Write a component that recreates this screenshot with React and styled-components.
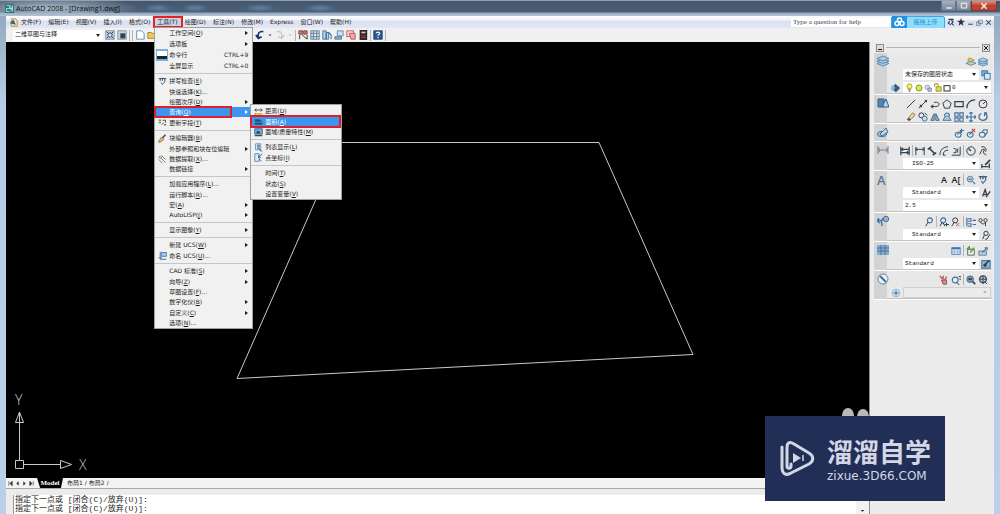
import styled, { createGlobalStyle } from "styled-components";

const GlobalStyle = createGlobalStyle`
	* {
		box-sizing: border-box;
	}

	body {
		margin: 0;
		font-family: "DejaVu Sans", "Noto Sans CJK SC", sans-serif;
		font-size: 6px;
		line-height: 10px;
		color: #1c1c1c;
	}

	button,
	input,
	select {
		font: inherit;
		color: inherit;
		margin: 0;
		padding: 0;
		border: 0;
		border-radius: 0;
		background: none;
		outline: none;
	}
`;

const ink = { fill: "none", stroke: "#33424f", strokeWidth: 1.2 };
const blue = { fill: "none", stroke: "#3f6f9f", strokeWidth: 1.3 };
const gold = { fill: "none", stroke: "#b98d2c", strokeWidth: 1.5 };

/* every glyph is drawn on a 12 x 12 grid */
const glyphs = {
	gear: (
		<>
			<rect x="1" y="1" width="10" height="10" fill="#d4dde6" stroke="#6f8190" />
			<circle cx="6" cy="6" r="2.6" {...blue} />
			<path d="M2 2l2 2M10 2L8 4M2 10l2-2M10 10L8 8" {...ink} />
		</>
	),
	workspace: (
		<>
			<rect x="1" y="1" width="10" height="10" fill="#c8d2db" stroke="#7c8b98" />
			<rect x="4" y="4" width="6" height="6" fill="#29435c" />
		</>
	),
	page: <path d="M2 1h6l3 3v7H2z" fill="#fff" stroke="#4b86bd" />,
	folder: <path d="M1 3h4l1 1h5v6H1z" fill="#f2c75c" stroke="#9b7a2a" />,
	save: <path d="M1 1h10v10H1zM3 1v4h6V1" fill="#6f97c4" stroke="#2e4d73" />,
	undo: <path d="M10 2C5 1 3 4 4 9M1 6l3 4 4-2" fill="none" stroke="#14346e" strokeWidth="2" />,
	redo: <path d="M2 2c5-1 7 2 6 7M11 6l-3 4-4-2" fill="none" stroke="#c2c7cc" strokeWidth="1.6" />,
	caret: <path d="M3 5h6l-3 3z" fill="#222" />,
	caretGray: <path d="M3 5h6l-3 3z" fill="#b5b5b5" />,
	props: (
		<>
			<path d="M1 1h5v4H1zM7 1h4v4H7z" fill="#cf7b6b" stroke="#7a3a33" />
			<path d="M2 6v5M5 6l6 5M11 6v5" {...ink} />
		</>
	),
	design: (
		<>
			<rect x="1" y="1" width="10" height="10" fill="#dbe6ef" stroke="#55748f" />
			<path d="M4 1v10M8 1v10M1 4h10M1 8h10" stroke="#55748f" />
		</>
	),
	palette: (
		<>
			<path d="M1 1h4v10H1zM5 3h3v8H5z" fill="#b4d3ee" stroke="#336699" />
			<path d="M8 3l3 3v5" {...blue} />
		</>
	),
	sheet: (
		<>
			<path d="M4 1h7v6H4z" fill="#cfe0ef" stroke="#5784ab" />
			<path d="M1 8h8v3H1z" fill="#8eb3d2" stroke="#4b7092" />
		</>
	),
	markup: (
		<>
			<rect x="1" y="1" width="8" height="7" fill="#fbdada" stroke="#c84a4a" />
			<path d="M4 4h7v7H6z" fill="#f1aaaa" stroke="#b04b54" />
		</>
	),
	calc: (
		<>
			<rect x="2" y="0" width="9" height="12" fill="#34262a" />
			<path d="M4 3h5" stroke="#cfc4b4" strokeWidth="2" />
			<path d="M4 7h5M4 9h5" stroke="#a24a44" />
		</>
	),
	help: (
		<>
			<rect x="1" y="1" width="10" height="10" fill="#2a5a96" stroke="#18365d" />
			<path d="M4 4c0-2 4-2 4 0s-2 1-2 3M6 8v2" fill="none" stroke="#fff" strokeWidth="1.3" />
		</>
	),
	prompt: (
		<>
			<rect x="0" y="0" width="12" height="12" fill="#78afdf" />
			<rect x="1" y="2" width="10" height="8" fill="#fff" />
			<path d="M1 7h10v3H1z" fill="#1e2427" />
		</>
	),
	spell: (
		<>
			<path d="M1 2h10M3 2v3M6 1v4M9 2v3" stroke="#3f617d" strokeWidth="1.6" />
			<path d="M4 7l2 3 4-5" {...blue} />
		</>
	),
	field: (
		<>
			<path d="M1 3h3M1 6h3M8 9h3" stroke="#4b9b55" strokeWidth="2" />
			<path d="M6 3h4v3M5 9L8 6" {...ink} />
		</>
	),
	brush: (
		<>
			<path d="M10 1L5 6" {...ink} strokeWidth="2" />
			<path d="M5 4l3 3-5 4H1V9z" fill="#e6bd6b" stroke="#87672e" />
		</>
	),
	extract: (
		<>
			<path d="M2 2l8 8M5 1l5 5M1 6l5 5" stroke="#6b7884" strokeWidth="1.2" />
			<circle cx="3" cy="3" r="1.6" fill="#e9ded5" stroke="#85746b" />
		</>
	),
	ucs: (
		<>
			<path d="M3 1v10h8M1 9h4" {...blue} />
			<rect x="5" y="2" width="6" height="5" fill="#a8cbea" stroke="#2f6ba4" />
		</>
	),
	distance: (
		<>
			<path d="M1 4h10M3 2L1 4l2 2M9 2l2 2-2 2" {...ink} />
			<path d="M0 8h12v3H0z" fill="#ecd06c" />
			<path d="M2 8v2M5 8v2M8 8v2" stroke="#8a7429" />
		</>
	),
	area: (
		<>
			<path d="M1 3h7l3 4H1z" fill="#31566f" />
			<path d="M1 9h10" stroke="#26455b" strokeWidth="2" />
		</>
	),
	mass: (
		<>
			<rect x="1" y="1" width="10" height="7" fill="#6fa7d4" stroke="#2b5d8e" />
			<path d="M3 7c1-4 4-4 5 0" fill="#1d3e60" />
			<path d="M1 10h10" stroke="#314d63" strokeWidth="2" />
		</>
	),
	list: (
		<>
			<path d="M2 1h7v8H2z" fill="#dceaf6" stroke="#4b86bd" />
			<path d="M4 3h4M4 5h4M4 7h4" {...blue} />
			<path d="M7 9l4 2" {...ink} />
		</>
	),
	point: (
		<>
			<path d="M1 1h6v10H1z" fill="#dceaf6" stroke="#3d78af" />
			<path d="M11 1L6 6M6 3v3h3M7 8l3 3" {...blue} />
		</>
	),
	layers: (
		<g fill="#a9c9e2" stroke="#4c7ca2" strokeWidth=".8">
			<path d="M6 6l6 2.5L6 11 0 8.500z" />
			<path d="M6 3.500l6 2.500-6 2.500L0 6z" />
			<path d="M6 1l6 2.500L6 6 0 3.500z" />
		</g>
	),
	layerGold: (
		<>
			<path d="M6 5l6 2.500L6 10 0 7.500z" fill="#b9cede" stroke="#587f9c" />
			<path d="M4 1l6 3-4 2-4-2z" fill="#e9c75e" stroke="#a5832b" />
		</>
	),
	layerCopy: (
		<>
			<rect x="1" y="1" width="7" height="6" fill="#7eb2dd" stroke="#2b679c" />
			<rect x="4" y="4" width="7" height="7" fill="#d7e8f5" stroke="#2b679c" />
		</>
	),
	layerIso: (
		<>
			<path d="M5 1l6 5-5 5-5-4z" fill="#2f5b87" />
			<path d="M1 2l4 3-2 5-3-2z" fill="#8bb4d9" />
		</>
	),
	bulb: (
		<>
			<circle cx="6" cy="4.500" r="3.400" fill="#f9ee5e" stroke="#98902f" />
			<path d="M4.500 9h3M5 11h2" {...ink} />
		</>
	),
	sun: <circle cx="6" cy="6" r="4.500" fill="#dced3a" stroke="#879526" strokeWidth="1.500" />,
	snow: (
		<>
			<circle cx="5" cy="5" r="3.500" fill="#d4d9ea" stroke="#8089aa" />
			<path d="M6 6h5v5H6z" fill="#bbc3dd" stroke="#68739c" />
		</>
	),
	lock: (
		<>
			<path d="M2 5V3c0-3 5-3 5 0v1" {...gold} />
			<path d="M4 5h7v6H4z" fill="#d8e23e" stroke="#7e8427" />
		</>
	),
	swatch: <rect x="1.500" y="2.500" width="9" height="8" fill="#fff" stroke="#333" strokeWidth="1.500" />,
	draw: (
		<>
			<path d="M1 2h6v8H1z" fill="#5486b4" stroke="#315e88" />
			<path d="M6 8l3-6 3 8H6z" fill="#b9d2e8" stroke="#315e88" />
		</>
	),
	line: <path d="M1 11L11 1" {...ink} />,
	xline: (
		<>
			<path d="M1 11L11 1" {...ink} />
			<path d="M3 7v2h2M8 2h2v2" {...ink} strokeWidth="1.600" />
		</>
	),
	polyline: <path d="M1 9h6c5 0 5-5 1-5H5M4 7L1 9l3 2" {...ink} />,
	polygon: <path d="M6 1l5 4-2 6H3L1 5z" {...ink} />,
	rect: <path d="M1 3h10v6H1z" {...ink} strokeWidth="1.500" />,
	arc: <path d="M1 11C1 5 5 1 11 1" {...ink} strokeWidth="1.500" />,
	circle: (
		<>
			<circle cx="6" cy="6" r="4.800" {...ink} />
			<path d="M6 6l3-3" {...ink} />
		</>
	),
	eraser: (
		<>
			<path d="M3 7l5-6 3 2-5 6z" fill="#efd59a" stroke="#8d743d" />
			<path d="M1 9l2-2 3 2-2 2z" fill="#555" />
		</>
	),
	copy: (
		<>
			<circle cx="4" cy="4" r="3" {...ink} />
			<circle cx="8" cy="8" r="3" fill="#cadced" stroke="#33628c" />
			<path d="M8 1l3 3" {...ink} />
		</>
	),
	mirror: (
		<>
			<path d="M5 2v8H1zM7 2v8h4z" fill="#9fc0dd" stroke="#33526d" />
		</>
	),
	offset: (
		<>
			<path d="M1 10h10L8 5H4z" fill="#a9c8e4" stroke="#41698c" />
			<path d="M3 5c0-5 6-5 6 0" {...blue} />
		</>
	),
	array: <path d="M1 1h4v4H1zM7 1h4v4H7zM1 7h4v4H1zM7 7h4v4H7z" {...blue} />,
	move: <path d="M6 0v12M0 6h12M4 2l2-2 2 2M4 10l2 2 2-2M2 4L0 6l2 2M10 4l2 2-2 2" {...blue} />,
	rotate: <path d="M8 1c5 3 3 9-2 9S-1 4 4 2M8 5V1h3" {...blue} strokeWidth="1.500" />,
	orbit: (
		<>
			<ellipse cx="5" cy="8" rx="4.500" ry="2.500" fill="#9dc1df" stroke="#3d6d96" />
			<path d="M3 8l6-6 2 4-6 4z" fill="#bed5e8" stroke="#3d6d96" />
		</>
	),
	orbitAdd: (
		<>
			<ellipse cx="5" cy="8" rx="3.500" ry="3" {...blue} />
			<path d="M4 8l5-5M9 1v5M7 3h5" {...blue} />
		</>
	),
	orbitCut: (
		<>
			<ellipse cx="5" cy="8" rx="3.500" ry="3" {...blue} />
			<path d="M4 8l4-4" {...blue} />
			<path d="M7 1l4 4M11 1L7 5" stroke="#c94444" strokeWidth="1.400" />
		</>
	),
	orbitPair: (
		<>
			<ellipse cx="5" cy="8" rx="3.500" ry="3" {...blue} />
			<path d="M5 5l2-3h4v4L8 9" {...blue} />
		</>
	),
	dimension: <path d="M1 2v8M11 2v8M1 6h10M3 4L1 6l2 2M9 4l2 2-2 2" fill="none" stroke="#6c8193" />,
	dimFast: <path d="M1 1v10M11 1v10M1 4h10M1 8h10M3 2v4M9 6v4" {...ink} strokeWidth="1.500" />,
	dimLinear: <path d="M1 1v10M11 1v10M1 4h10M3 2L1 4l2 2M9 2l2 2-2 2" {...ink} />,
	dimAligned: <path d="M1 4l4-3M7 11l4-3M3 3l6 6" {...ink} strokeWidth="2" />,
	dimArc: <path d="M1 11C1 5 5 1 11 1M5 11c0-4 2-6 6-6M5 11h3" {...ink} />,
	dimOrdinate: <path d="M1 11h10V1M3 8h3V3M8 3v5M3 3h2" {...ink} />,
	dimRadius: (
		<>
			<circle cx="6" cy="6" r="5" {...ink} />
			<path d="M6 6L3 3" {...ink} strokeWidth="1.600" />
		</>
	),
	dimJog: <path d="M2 10L5 4h3L6 8l4 3M4 1c5-1 7 3 5 6" {...ink} />,
	dimStyle: (
		<>
			<path d="M1 6v5M1 9h8M10 5v6" {...ink} strokeWidth="1.500" />
			<path d="M5 7l6-6" {...ink} strokeWidth="2" />
		</>
	),
	find: (
		<>
			<circle cx="5" cy="5" r="3.500" fill="#b8cfe0" stroke="#55758e" />
			<path d="M8 8l3 3M3 5h4" {...blue} />
		</>
	),
	pen: <path d="M2 10L5 2l2 6M3 8h4M6 11l5-7" {...ink} strokeWidth="1.600" />,
	leaderPen: (
		<>
			<circle cx="6" cy="4" r="2.600" {...ink} />
			<path d="M4 6l-2 5M5 11h2l4-6" {...ink} />
		</>
	),
	leader: (
		<>
			<path d="M5 11C5 6 4 4 1 6M2 3L0 6l3 2" {...blue} />
			<path d="M5 6c0-2 1-3 3-3" {...blue} />
			<circle cx="9" cy="4" r="2.700" fill="#92b6d3" stroke="#4d7696" />
		</>
	),
	leaderOne: (
		<>
			<circle cx="7" cy="4" r="3" {...blue} />
			<path d="M5 6l-3 5" {...ink} />
		</>
	),
	leaderAdd: (
		<>
			<circle cx="5" cy="4" r="3" {...blue} />
			<path d="M4 6l-3 5M5 7l2 4M7 9h5M9 7v4" {...ink} />
		</>
	),
	leaderCut: (
		<>
			<circle cx="5" cy="4" r="3" {...ink} />
			<path d="M4 6l-3 5" {...ink} />
			<path d="M6 7l4 4M10 7l-4 4" stroke="#bd6969" strokeWidth="1.200" />
		</>
	),
	leaderAlign: <path d="M1 1v10M2 2h4v3H2M2 8h4v3H2M8 4h4M8 9h4" {...blue} />,
	leaderGroup: (
		<>
			<circle cx="3" cy="4" r="2" {...ink} />
			<circle cx="9" cy="4" r="2" {...ink} />
			<path d="M3 6c1 3 5 3 6 0v5" {...ink} />
		</>
	),
	tableBig: (
		<>
			<rect x="0" y="1" width="12" height="10" fill="#86acd0" />
			<path d="M0 4h12M0 7h12M4 1v10M8 1v10" stroke="#4a7398" />
		</>
	),
	table: (
		<>
			<rect x="1" y="2" width="10" height="8" fill="#e0ecf7" stroke="#3d78af" />
			<path d="M1 3h10" stroke="#3d78af" strokeWidth="2" />
			<path d="M4 4v6M8 4v6M1 7h10" stroke="#8cb1d2" />
		</>
	),
	tableLink: (
		<>
			<path d="M2 4h8v7H2z" fill="#e6efe0" stroke="#555" />
			<path d="M1 4l3-3v3h4M5 8l5-6" stroke="#57953e" strokeWidth="1.600" fill="none" />
		</>
	),
	tableOut: (
		<>
			<path d="M1 6h9v5H1z" fill="#b5d0e6" stroke="#55758e" />
			<path d="M5 8l6-6M8 2h3v3" {...blue} />
		</>
	),
	tableStyle: (
		<>
			<rect x="1" y="2" width="10" height="9" fill="#8eb8df" stroke="#27527c" />
			<path d="M3 8l7-6M4 9l3-2" {...ink} strokeWidth="2" />
		</>
	),
	compass: (
		<>
			<circle cx="6" cy="6" r="5" fill="#e8f0f7" stroke="#6d8ca6" />
			<path d="M3 3l6 6" {...blue} strokeWidth="2" />
		</>
	),
	pan: (
		<>
			<path d="M1 1l3 4M5 1v4M9 2L7 6" stroke="#c65a63" strokeWidth="1.800" />
			<path d="M3 6h6v5H5z" fill="#d98d90" stroke="#87454b" />
		</>
	),
	zoomLive: (
		<>
			<circle cx="5" cy="6" r="3.500" {...blue} />
			<path d="M7 9l3 3M9 2h3M10 5h2" {...ink} />
		</>
	),
	zoomArea: (
		<>
			<circle cx="5" cy="5" r="4" fill="#7895ad" stroke="#4e687d" />
			<path d="M8 8l3 3M3 5h4" {...ink} strokeWidth="2" />
		</>
	),
	zoomAll: (
		<>
			<circle cx="6" cy="5" r="4" fill="#c4ced7" stroke="#3e5060" strokeWidth="1.500" />
			<path d="M6 1v10M1 5h10M8 8l3 3" {...ink} />
		</>
	),
	camera: (
		<>
			<circle cx="6" cy="6" r="4.500" fill="#dbe6ef" stroke="#8ba6bd" />
			<path d="M6 3v6M3 6h6" {...blue} />
		</>
	),
	dwg: (
		<>
			<path d="M3 1h6l2 3v7H3z" fill="#f5e3a0" stroke="#a5832b" />
			<path d="M1 7l5-5 3 7z" fill="#2c62a5" />
		</>
	),
	star: <path d="M6 0l1.500 4.300H12L8.400 7l1.300 4.500L6 9l-3.700 2.500L3.600 7 0 4.300h4.500z" fill="#333" />,
	satellite: <path d="M2 2h4l3 4-2 2 3 3M4 4l-2 4 4 2M7 1l3 2" {...ink} strokeWidth="1.700" />,
	minimize: <path d="M2 9h8" stroke="currentColor" strokeWidth="2" />,
	maximize: <path d="M2 2h8v7H2z" fill="none" stroke="currentColor" strokeWidth="1.500" />,
	restore: <path d="M4 2h7v6H4zM1 5h6v6H1z" fill="none" stroke="currentColor" />,
	close: <path d="M2 2l8 8M10 2l-8 8" stroke="currentColor" strokeWidth="2" />,
	first: <path d="M3 2v8M9 2L5 6l4 4z" fill="#333" stroke="#333" />,
	prev: <path d="M8 2L4 6l4 4z" fill="#333" />,
	next: <path d="M4 2l4 4-4 4z" fill="#333" />,
	last: <path d="M9 2v8M3 2l4 4-4 4z" fill="#333" stroke="#333" />,
};

const Icon = ({ name, size = 10 }) => (
	<svg width={size} height={size} viewBox="0 0 12 12" aria-hidden="true">
		{glyphs[name]}
	</svg>
);

/* "(O)" style accelerator, underlined in drop-down menus */
const Label = ({ text, hotkey, after = "" }) => (
	<span>
		{text}(<u>{hotkey}</u>){after}
	</span>
);

const toolsMenu = [
	[
		{ text: "工作空间", hotkey: "O", sub: true },
		{ text: "选项板", sub: true },
		{ text: "命令行", icon: "prompt", keys: "CTRL+9" },
		{ text: "全屏显示", keys: "CTRL+0" },
	],
	[
		{ text: "拼写检查", hotkey: "E", icon: "spell" },
		{ text: "快速选择", hotkey: "K", after: "..." },
		{ text: "绘图次序", hotkey: "D", sub: true },
		{ text: "查询", hotkey: "Q", sub: true, active: true },
		{ text: "更新字段", hotkey: "T", icon: "field" },
	],
	[
		{ text: "块编辑器", hotkey: "B", icon: "brush" },
		{ text: "外部参照和块在位编辑", sub: true },
		{ text: "数据提取", hotkey: "X", after: "...", icon: "extract" },
		{ text: "数据链接", sub: true },
	],
	[
		{ text: "加载应用程序", hotkey: "L", after: "..." },
		{ text: "运行脚本", hotkey: "R", after: "..." },
		{ text: "宏", hotkey: "A", sub: true },
		{ text: "AutoLISP", hotkey: "J", sub: true },
	],
	[{ text: "显示图像", hotkey: "Y", sub: true }],
	[
		{ text: "新建 UCS", hotkey: "W", sub: true },
		{ text: "命名 UCS", hotkey: "U", after: "...", icon: "ucs" },
	],
	[
		{ text: "CAD 标准", hotkey: "S", sub: true },
		{ text: "向导", hotkey: "Z", sub: true },
		{ text: "草图设置", hotkey: "F", after: "..." },
		{ text: "数字化仪", hotkey: "B", sub: true },
		{ text: "自定义", hotkey: "C", sub: true },
		{ text: "选项", hotkey: "N", after: "..." },
	],
];

const inquiryMenu = [
	[
		{ text: "距离", hotkey: "D", icon: "distance" },
		{ text: "面积", hotkey: "A", icon: "area", active: true },
		{ text: "面域/质量特性", hotkey: "M", icon: "mass" },
	],
	[
		{ text: "列表显示", hotkey: "L", icon: "list" },
		{ text: "点坐标", hotkey: "I", icon: "point" },
	],
	[
		{ text: "时间", hotkey: "T" },
		{ text: "状态", hotkey: "S" },
		{ text: "设置变量", hotkey: "V" },
	],
];

const Menu = ({ groups, submenu }) => (
	<MenuBox $submenu={submenu}>
		{groups.map((group, i) => (
			<MenuGroup key={i}>
				{group.map((item) => (
					<MenuItem key={item.text} $active={item.active} $short={item.sub}>
						<button>
							<i>{item.icon && <Icon name={item.icon} size={item.keys ? 12 : 9} />}</i>
							{item.hotkey ? <Label {...item} /> : <span>{item.text}</span>}
							{item.keys && <kbd>{item.keys}</kbd>}
							{item.sub && <Arrow />}
						</button>
						{item.active && !submenu && <Menu groups={inquiryMenu} submenu />}
					</MenuItem>
				))}
			</MenuGroup>
		))}
	</MenuBox>
);

const Select = ({ label, value, indent, disabled, children }) => (
	<SelectBox $indent={indent} $disabled={disabled}>
		{children}
		<select aria-label={label} disabled={disabled}>
			<option>{value}</option>
		</select>
	</SelectBox>
);

const Tools = ({ names }) => (
	<ToolRow>
		{names.map((name, i) =>
			name === "|" ? (
				<Divider key={i} />
			) : (
				<IconButton key={i} aria-label={name}>
					{name === "A" || name === "A[" ? <b>{name}</b> : <Icon name={name} />}
				</IconButton>
			)
		)}
	</ToolRow>
);

const Section = ({ icon, children }) => (
	<SectionBox>
		<div className="mark">{icon === "A" ? <b>A</b> : <Icon name={icon} size={12} />}</div>
		<div className="body">{children}</div>
	</SectionBox>
);

const menusBefore = ["文件(F)", "编辑(E)", "视图(V)", "插入(I)", "格式(O)"];
const menusAfter = ["绘图(D)", "标注(N)", "修改(M)", "Express", "窗口(W)", "帮助(H)"];

const App = () => (
	<Window>
		<GlobalStyle />
		<TitleBar>
			<AppIcon>
				<svg width="9" height="9" viewBox="0 0 12 12" aria-hidden="true">
					<rect width="12" height="12" fill="#247b78" />
					<path d="M2 2h4v4H2v4h4M8 2v8M10 2v8M6 6h4" fill="none" stroke="#d5eeee" />
				</svg>
			</AppIcon>
			<h1>AutoCAD 2008 - [Drawing1.dwg]</h1>
			<WindowButtons>
				<button aria-label="最小化">
					<Icon name="minimize" size={8} />
				</button>
				<button aria-label="最大化">
					<Icon name="maximize" size={8} />
				</button>
				<button aria-label="关闭" className="close">
					<Icon name="close" size={8} />
				</button>
			</WindowButtons>
		</TitleBar>

		<MenuBar>
			<Icon name="dwg" size={9} />
			<nav>
				{menusBefore.map((name) => (
					<MenuButton key={name}>{name}</MenuButton>
				))}
				<MenuAnchor>
					<MenuButton $open>工具(T)</MenuButton>
					<Menu groups={toolsMenu} />
				</MenuAnchor>
				{menusAfter.map((name) => (
					<MenuButton key={name}>{name}</MenuButton>
				))}
			</nav>
			<HelpInput aria-label="help" placeholder="Type a question for help" />
			<Upload>
				<svg width="15" height="12" viewBox="0 0 15 12" aria-hidden="true">
					<g fill="none" stroke="#fff" strokeWidth="1.500">
						<circle cx="7.500" cy="4" r="2" />
						<circle cx="5" cy="7.500" r="2" />
						<circle cx="10" cy="7.500" r="2" />
					</g>
				</svg>
				<span>拖拽上传</span>
			</Upload>
			<ChildButtons>
				<IconButton aria-label="通讯中心">
					<Icon name="satellite" size={8} />
				</IconButton>
				<IconButton aria-label="收藏夹">
					<Icon name="star" size={8} />
				</IconButton>
				<IconButton aria-label="最小化图形">
					<Icon name="minimize" size={7} />
				</IconButton>
				<IconButton aria-label="还原图形">
					<Icon name="restore" size={7} />
				</IconButton>
				<IconButton aria-label="关闭图形">
					<Icon name="close" size={7} />
				</IconButton>
			</ChildButtons>
		</MenuBar>

		<Toolbar>
			<div className="workspace">
				<Select label="工作空间" value="二维草图与注释" />
			</div>
			<Tools names={["gear", "workspace"]} />
			<Divider />
			<Divider />
			<Tools
				names={["page", "folder", "save", "page", "page", "copy", "copy", "page", "brush", "save"]}
			/>
			<Tools names={["undo"]} />
			<Icon name="caret" size={6} />
			<Tools names={["redo"]} />
			<Icon name="caretGray" size={6} />
			<Divider />
			<Tools names={["props", "design", "palette", "sheet", "markup", "calc"]} />
			<Divider />
			<Tools names={["help"]} />
			<Divider />
		</Toolbar>

		<Workspace>
			<Main>
				<Canvas>
					<svg viewBox="0 0 863 436" preserveAspectRatio="xMinYMin meet">
						<g fill="none" stroke="#c9c9c9">
							<path d="M335 100.500H593L687 312.500 231 336.500z" />
							<path d="M13.500 380V370M9.500 418.500h8v8h-8zM13.500 418V381M9.500 380.500h8L13.500 370zM18 422.500H55M54.500 418.500v8l11-4z" />
						</g>
						<text x="9" y="363">
							Y
						</text>
						<text x="73" y="428">
							X
						</text>
						<ellipse cx="842" cy="374" rx="6" ry="8" fill="#b9b9b9" />
						<ellipse cx="857" cy="375" rx="6" ry="8" fill="#b9b9b9" />
					</svg>
				</Canvas>
				<LayoutTabs>
					<Icon name="first" size={7} />
					<Icon name="prev" size={7} />
					<Icon name="next" size={7} />
					<Icon name="last" size={7} />
					<button className="model">Model</button>
					<button>布局1</button>
					<span>/</span>
					<button>布局2</button>
					<span>/</span>
				</LayoutTabs>
				<Command>
					<output>
						指定下一点或 [闭合(C)/放弃(U)]:
						<br />
						指定下一点或 [闭合(C)/放弃(U)]:
					</output>
					<div className="scroll">
						<Icon name="caret" size={7} />
					</div>
				</Command>
			</Main>

			<Dashboard>
				<header>
					<IconButton aria-label="收起面板">
						<Icon name="minimize" size={6} />
					</IconButton>
					<hr />
					<IconButton aria-label="关闭面板">
						<Icon name="close" size={6} />
					</IconButton>
				</header>
				<Section icon="layers">
					<Tools names={["layerGold", "layers"]} />
					<Row>
						<Select label="图层状态" value="未保存的图层状态" />
						<Icon name="layerCopy" />
					</Row>
					<Row $wide>
						<Icon name="layerIso" />
						<Select label="图层" value="0">
							<Icon name="bulb" size={9} />
							<Icon name="sun" size={8} />
							<Icon name="snow" size={8} />
							<Icon name="lock" size={9} />
							<Icon name="swatch" size={8} />
						</Select>
					</Row>
				</Section>
				<Section icon="draw">
					<Tools names={["line", "xline", "polyline", "polygon", "rect", "arc", "circle"]} />
					<Tools names={["eraser", "copy", "mirror", "offset", "array", "move", "rotate"]} />
				</Section>
				<Section icon="orbit">
					<Tools names={["orbitAdd", "orbitCut", "orbitPair"]} />
				</Section>
				<Section icon="dimension">
					<Tools
						names={["dimFast", "|", "dimLinear", "dimAligned", "dimArc", "dimOrdinate", "|", "dimRadius", "dimJog"]}
					/>
					<Row>
						<Select label="标注样式" value="ISO-25" indent />
						<Icon name="dimStyle" />
					</Row>
				</Section>
				<Section icon="A">
					<Tools names={["A", "A[", "|", "find", "spell"]} />
					<Row>
						<Select label="文字样式" value="Standard" indent />
						<Icon name="pen" />
					</Row>
					<Row>
						<Select label="文字高度" value="2.5" />
					</Row>
				</Section>
				<Section icon="leader">
					<Tools names={["leaderOne", "|", "leaderAdd", "leaderCut", "|", "leaderAlign", "leaderGroup"]} />
					<Row>
						<Select label="引线样式" value="Standard" indent />
						<Icon name="leaderPen" />
					</Row>
				</Section>
				<Section icon="tableBig">
					<Tools names={["table", "|", "tableLink", "tableOut"]} />
					<Row>
						<Select label="表格样式" value="Standard" />
						<Icon name="tableStyle" />
					</Row>
				</Section>
				<Section icon="compass">
					<Tools names={["pan", "zoomLive", "|", "zoomArea", "zoomAll"]} />
					<Row $wide>
						<Icon name="camera" />
						<Select label="视图" value="" disabled />
					</Row>
				</Section>
			</Dashboard>
		</Workspace>

		<Watermark>
			<svg width="36" height="38" viewBox="0 0 36 38" aria-hidden="true">
				<g fill="none" stroke="#d3d7e4" strokeWidth="3" strokeLinecap="round" strokeLinejoin="round">
					<path d="M3 7v20c0 7 4 9 9 6l18-9c5-3 5-8 0-11L15 4C10 1 8 3 8 8v18c0 3 4 3 4 0v-2" />
				</g>
				<path d="M14 13l8 5-8 5z" fill="#d3d7e4" />
				<path d="M24 15v6" stroke="#d3d7e4" strokeWidth="1.500" />
			</svg>
			<div>
				<strong>溜溜自学</strong>
				<span>zixue.3D66.COM</span>
			</div>
		</Watermark>
	</Window>
);

const Window = styled.div`
	position: relative;
	display: flex;
	flex-direction: column;
	height: 100vh;
	padding: 0 6px;
	overflow: hidden;
	background: linear-gradient(#8fa3b8, #b4cce5 100px, #b9d0e8);
	border-top: 1px solid #93a0ae;
`;

const TitleBar = styled.header`
	display: flex;
	align-items: center;
	gap: 2px;
	height: 15px;
	margin: 0 -6px;
	padding-left: 5px;
	background:
		radial-gradient(ellipse 90px 14px at 50px 8px, #aebccb, transparent),
		radial-gradient(ellipse 14px 4px at 158px 7px, #5f83a5, transparent),
		radial-gradient(ellipse 14px 4px at 195px 7px, #5f83a5, transparent),
		radial-gradient(ellipse 16px 4px at 260px 7px, #5f83a5, transparent),
		radial-gradient(ellipse 16px 4px at 320px 7px, #5f83a5, transparent),
		linear-gradient(#43566d, #4b6077 11px, #92a7bd 12px, #b7c6d8);

	h1 {
		flex: 1;
		margin: 0;
		font-family: "Open Sans", sans-serif;
		font-size: 7px;
		font-weight: 400;
		color: #111;
	}
`;

const AppIcon = styled.span`
	display: flex;
`;

const WindowButtons = styled.div`
	display: flex;
	align-self: flex-start;
	margin-right: 3px;

	button {
		display: flex;
		align-items: center;
		justify-content: center;
		width: 15px;
		height: 10px;
		color: #f5f5f5;
		background: linear-gradient(#a5b1bf, #75879a);
		border: 1px solid #64758a;
		border-top: 0;
	}

	.close {
		width: 26px;
		background: linear-gradient(#dc9284, #c4402a 50%, #bc4733);
		border-color: #7b3a35;
	}
`;

const MenuBar = styled.div`
	display: flex;
	align-items: center;
	height: 12px;
	padding: 0 2px 0 3px;
	background: linear-gradient(#fbfcfe, #f1f4fa 4px, #dae0f0 5px, #e2e7f4);

	nav {
		display: flex;
		flex: 1;
		align-items: center;
	}
`;

const MenuButton = styled.button`
	display: block;
	height: 10px;
	padding: 0 4px 0 3px;
	white-space: nowrap;
	line-height: 10px;
	${(props) => props.$open && "background: #cbd4e4; outline: 2px solid #e0222a; outline-offset: -1px;"}
`;

const MenuAnchor = styled.div`
	position: relative;
`;

const MenuBox = styled.ul`
	position: absolute;
	z-index: 2;
	top: ${(props) => (props.$submenu ? "-3px" : "10px")};
	left: ${(props) => (props.$submenu ? "95px" : "0")};
	width: ${(props) => (props.$submenu ? "92px" : "99px")};
	margin: 0;
	padding: ${(props) => (props.$submenu ? "1px 0 0" : "0")};
	list-style: none;
	color: #1c1c1c;
	background: #f1f1f1;
	border: 1px solid #a0a0a0;
`;

const MenuGroup = styled.div`
	& + & {
		margin-top: 2px;
		padding-top: 2px;
		border-top: 1px solid #c6c6c6;
	}
`;

const MenuItem = styled.li`
	position: relative;
	color: ${(props) => (props.$active ? "#fff" : "inherit")};
	background: ${(props) => (props.$active ? "#3c96f0" : "none")};

	& > button {
		display: flex;
		align-items: center;
		width: 100%;
		min-height: 10px;
		padding-right: 4px;
		white-space: nowrap;
		text-align: left;
	}

	&:nth-child(3n + 2) > button {
		min-height: 11px;
	}

	& > button > i {
		display: flex;
		flex: none;
		justify-content: center;
		width: 14px;
	}

	kbd {
		margin-left: auto;
		font: inherit;
	}

	/* red frame round the current choice */
	&::after {
		content: "";
		display: ${(props) => (props.$active ? "block" : "none")};
		position: absolute;
		inset: -1px ${(props) => (props.$short ? "20px" : "0")} -1px -1px;
		border: 2px solid #dc1f2a;
		pointer-events: none;
	}
`;

const Arrow = styled.em`
	margin-left: auto;
	border: 2px solid transparent;
	border-left: 3px solid currentColor;
	border-right: 0;
`;

const HelpInput = styled.input`
	width: 100px;
	height: 9px;
	padding-left: 2px;
	font-family: "Liberation Serif", serif;
	font-size: 7px;
	background: #fff;

	&::placeholder {
		color: #444;
		opacity: 1;
	}
`;

const Upload = styled.button`
	display: flex;
	align-items: center;
	height: 13px;
	color: #2b8fd6;
	background: #8fdcfb;
	border: 1px solid #3ba5e6;
	border-radius: 2px;

	svg {
		background: #2492e2;
	}

	span {
		width: 37px;
		text-align: center;
	}
`;

const ChildButtons = styled.div`
	display: flex;
	gap: 2px;
	margin-left: 2px;
	color: #4f5c69;
`;

const IconButton = styled.button`
	display: flex;
	align-items: center;
	justify-content: center;
	flex: none;

	b {
		width: 10px;
		font-family: "Open Sans", sans-serif;
		font-size: 9px;
		font-weight: 600;
	}
`;

const Toolbar = styled.div`
	display: flex;
	align-items: center;
	gap: 2px;
	height: 14px;
	padding-left: 7px;
	background: #f0f0f0;

	.workspace {
		display: flex;
		width: 90px;
	}
`;

const ToolRow = styled.div`
	display: flex;
	align-items: center;
	gap: 2px;
`;

const Divider = styled.span`
	width: 1px;
	height: 11px;
	background: #b4b4b4;
`;

const SelectBox = styled.div`
	position: relative;
	display: flex;
	flex: 1;
	align-items: center;
	gap: 1px;
	min-width: 0;
	height: 11px;
	padding-left: ${(props) => (props.$indent ? "9px" : "2px")};
	background: ${(props) => (props.$disabled ? "#ececec" : "#fff")};
	border: ${(props) => (props.$disabled ? "1px solid #cfcfcf" : "0")};

	svg {
		flex: none;
	}

	select {
		flex: 1;
		min-width: 0;
		height: 11px;
		appearance: none;
		font-family: "Liberation Mono", "Noto Sans CJK SC", monospace;
	}

	&::after {
		content: "";
		position: absolute;
		right: 3px;
		border: 2px solid transparent;
		border-top: 3px solid ${(props) => (props.$disabled ? "#bbb" : "#222")};
		border-bottom: 0;
	}
`;

const Workspace = styled.div`
	display: flex;
	flex: 1;
	min-height: 0;
	background: #ececec;
`;

const Main = styled.main`
	display: flex;
	flex: 1;
	flex-direction: column;
	min-width: 0;
`;

const Canvas = styled.div`
	flex: 1;
	min-height: 0;
	overflow: hidden;
	background: #000;

	svg {
		display: block;
		width: 100%;
	}

	text {
		font-family: "Open Sans", sans-serif;
		font-size: 14px;
		font-weight: 300;
		fill: #c9c9c9;
	}
`;

const LayoutTabs = styled.div`
	display: flex;
	align-items: center;
	height: 10px;
	padding-left: 1px;
	background: #f4f4f4;

	button {
		padding: 0 2px;
	}

	.model {
		width: 26px;
		margin: 0 2px;
		color: #fff;
		font-family: "Liberation Serif", serif;
		font-size: 7px;
		font-weight: 700;
		background: #000;
		clip-path: polygon(0 0, 100% 0, 92% 100%, 12% 100%);
	}
`;

const Command = styled.div`
	display: flex;
	height: 26px;
	padding: 6px 0 0 7px;
	border-top: 1px solid #a8a8a8;
	background: #ececec;

	output {
		flex: 1;
		padding-left: 1px;
		font-family: "Liberation Mono", "Noto Sans CJK SC", monospace;
		font-size: 8px;
		line-height: 9px;
		background: #fff;
		border-left: 1px solid #999;
	}

	.scroll {
		display: flex;
		align-items: flex-end;
		justify-content: center;
		width: 13px;
		background: #f2f2f2;
	}
`;

const Dashboard = styled.aside`
	width: 125px;
	padding: 0 2px 0 4px;
	border-left: 1px solid #8d8d8d;

	header {
		display: flex;
		align-items: center;
		gap: 2px;
		height: 11px;
		padding: 0 2px;
	}

	header button {
		background: #dcdcdc;
		border: 1px solid #8c8c8c;
	}

	hr {
		flex: 1;
		margin: 0;
		border: 0;
		border-top: 1px solid #b6b6b6;
	}
`;

const SectionBox = styled.section`
	display: flex;
	background: #e8e8e8;
	border-bottom: 1px solid #fff;
	box-shadow: inset 0 -1px #c2c2c2;

	.mark {
		width: 13px;
		padding: 2px 0 0 3px;
		background: #d3d3d3;
	}

	.mark b {
		display: block;
		font-family: "Open Sans", sans-serif;
		font-size: 13px;
		font-weight: 600;
		line-height: 14px;
		color: #54779d;
	}

	.body {
		display: flex;
		flex: 1;
		flex-direction: column;
		min-width: 0;
		padding: 2px 1px 0 2px;
	}

	.body > * {
		height: 13px;
	}

	.body > ${ToolRow} {
		justify-content: flex-end;
		padding-right: 3px;
	}
`;

const Row = styled.div`
	display: flex;
	align-items: center;
	gap: 2px;
	padding-left: ${(props) => (props.$wide ? "2px" : "14px")};
`;

const Watermark = styled.div`
	position: absolute;
	z-index: 3;
	right: 55px;
	bottom: 13px;
	display: flex;
	align-items: center;
	gap: 12px;
	width: 180px;
	height: 85px;
	padding-left: 14px;
	color: #d3d7e4;
	background: #212f57;

	div {
		display: flex;
		flex-direction: column;
		padding-bottom: 2px;
	}

	strong {
		font-family: "Noto Sans CJK SC", sans-serif;
		font-size: 26px;
		font-weight: 700;
		line-height: 36px;
	}

	span {
		font-size: 12px;
		line-height: 14px;
	}
`;

export default App;
